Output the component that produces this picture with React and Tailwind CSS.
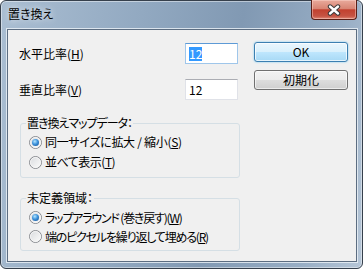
import React from 'react';

function Radio({ checked, children, h = 'h-[20px]', track = '' }) {
  return (
    <div className={`flex items-center ${h}`}>
      <span className="flex items-center justify-center w-[13px] h-[13px] rounded-full border border-[#8a8d92] bg-[linear-gradient(135deg,#cfd2d6,#fdfdfd)]">
        <span className="flex items-center justify-center w-[11px] h-[11px] rounded-full border border-[#f6f6f6] bg-[linear-gradient(135deg,#dcdee1,#f9f9f9)]">
          {checked && (
            <span className="w-[7px] h-[7px] rounded-full bg-[radial-gradient(circle_at_40%_35%,#b4e6ff_0%,#3e93dc_45%,#0d4a8c_100%)]" />
          )}
        </span>
      </span>
      <span className={`ml-[3px] ${track}`}>{children}</span>
    </div>
  );
}

function Acc({ k }) {
  return (
    <>
      (<span className="underline underline-offset-[1px]">{k}</span>)
    </>
  );
}

export default function App() {
  return (
    <div className="w-[364px] h-[269px] bg-white font-['Noto_Sans_CJK_JP','Noto_Sans_CJK_SC',sans-serif] text-[12px] leading-[14px] text-black [font-feature-settings:'palt']">
      <div className="w-[363px] h-[269px] flex flex-col rounded-[6px] border border-[#36404c] bg-[linear-gradient(100deg,#aabed2_0%,#92a9c1_35%,#8199b3_60%,#98aec5_85%,#b6c6d7_100%)] shadow-[inset_0_0_0_1px_rgba(255,255,255,0.45)]">
        {/* title bar */}
        <div className="h-[27px] flex items-start justify-between">
          <span className="ml-[7px] mt-[6px] [text-shadow:0_0_6px_rgba(255,255,255,0.9)]">置き換え</span>
          <div className="mr-[5px] -mt-[1px] w-[46px] h-[20px] flex items-center justify-center rounded-b-[4px] border border-t-0 border-[#5a1f17] bg-[linear-gradient(180deg,#e9aa9c_0%,#d88574_45%,#c2412f_52%,#c65443_85%,#e08a78_100%)] shadow-[inset_0_0_0_1px_rgba(255,220,210,0.45)]">
            <svg width="14" height="12" viewBox="0 0 14 12">
              <path d="M3 2.5 L11 9.5 M11 2.5 L3 9.5" stroke="#3a3a3a" strokeWidth="4.4" strokeLinecap="round" />
              <path d="M3 2.5 L11 9.5 M11 2.5 L3 9.5" stroke="#ffffff" strokeWidth="2.4" strokeLinecap="round" />
            </svg>
          </div>
        </div>

        {/* client area */}
        <div className="mt-[1px] ml-[6px] mr-[5px] h-[233px] border border-[#5c6d81] bg-[#f0f0f0] shadow-[0_0_0_1px_rgba(236,242,248,0.8)] pt-[12px] pl-[11px]">
          <div className="flex items-start">
            <div className="mt-[1px] w-[219px] flex flex-col gap-[15px]">
              <div className="h-[21px] flex items-center justify-between">
                <span>水平比率<Acc k="H" /></span>
                <div className="w-[53px] h-[21px] flex items-center pl-[3px] bg-white border border-[#9fc6ea] border-t-[#5d9ad6]">
                  <span className="bg-[#3399ff] text-white leading-[14px]">12</span>
                </div>
              </div>
              <div className="h-[21px] flex items-center justify-between">
                <span>垂直比率<Acc k="V" /></span>
                <div className="w-[53px] h-[21px] flex items-center pl-[3px] bg-white border border-[#e0e2e8] border-t-[#abadb3]">
                  <span>12</span>
                </div>
              </div>
            </div>
            <div className="ml-[16px] flex flex-col gap-[8px]">
              <div className="w-[94px] h-[20px] flex items-center justify-center rounded-[3px] border border-[#3c7fb1] bg-[linear-gradient(180deg,#eaf6fd_0%,#d9f0fc_50%,#bee6fd_51%,#a7d9f5_100%)] shadow-[inset_0_0_0_1px_rgba(255,255,255,0.7),0_0_2px_#6cc5f3]">
                OK
              </div>
              <div className="w-[94px] h-[20px] flex items-center justify-center rounded-[3px] border border-[#707070] bg-[linear-gradient(180deg,#f2f2f2_0%,#ebebeb_50%,#dddddd_51%,#cfcfcf_100%)] shadow-[inset_0_0_0_1px_rgba(255,255,255,0.6)]">
                初期化
              </div>
            </div>
          </div>

          <fieldset className="mt-[16px] ml-[1px] w-[220px] rounded-[3px] border border-[#d5dfe5]">
            <legend className="ml-[5px] px-[1px] tracking-[-1px]">置き換えマップデータ：</legend>
            <div className="pl-[8px] pt-[2px] pb-[5px]">
              <Radio checked track="tracking-[-0.3px]">同一サイズに拡大 / 縮小<Acc k="S" /></Radio>
              <Radio track="tracking-[-0.5px]">並べて表示<Acc k="T" /></Radio>
            </div>
          </fieldset>

          <fieldset className="mt-[13px] ml-[1px] w-[220px] rounded-[3px] border border-[#d5dfe5]">
            <legend className="ml-[5px] px-[1px]">未定義領域：</legend>
            <div className="pl-[8px] pt-[3px] pb-[4px]">
              <Radio checked h="h-[19px]" track="tracking-[-1.2px]">ラップアラウンド (巻き戻す)<Acc k="W" /></Radio>
              <Radio h="h-[19px]" track="tracking-[-1.2px]">端のピクセルを繰り返して埋める<Acc k="R" /></Radio>
            </div>
          </fieldset>
        </div>
      </div>
    </div>
  );
}
